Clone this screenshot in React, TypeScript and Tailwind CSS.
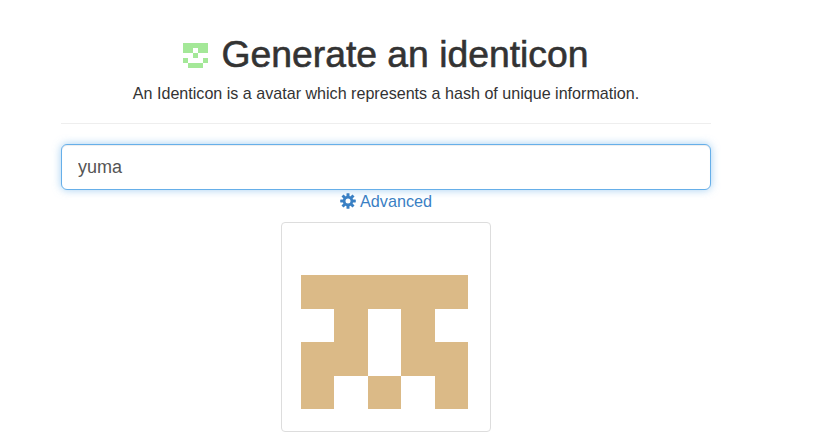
const FAVICON: [number, number, number][] = [
  [0, 0, 5],
  [0, 1, 2],
  [3, 1, 2],
  [2, 2, 1],
  [0, 3, 1],
  [4, 3, 1],
  [1, 4, 3],
];

const IDENTICON: [number, number, number][] = [
  [0, 1, 5],
  [1, 2, 1],
  [3, 2, 1],
  [0, 3, 2],
  [3, 3, 2],
  [0, 4, 1],
  [2, 4, 1],
  [4, 4, 1],
];

function Pixels({ cells, color, size }: { cells: [number, number, number][]; color: string; size: number }) {
  return (
    <svg width={size} height={size} viewBox="0 0 5 5" shapeRendering="crispEdges" className="block shrink-0">
      {cells.map(([x, y, w]) => (
        <rect key={`${x}-${y}`} x={x} y={y} width={w} height={1} fill={color} />
      ))}
    </svg>
  );
}

// eight-tooth cog, the font icon from the reference
function Cog() {
  return (
    <svg width={16} height={16} viewBox="0 0 16 16" className="block shrink-0" fill="currentColor">
      {[0, 45, 90, 135, 180, 225, 270, 315].map((deg) => (
        <rect key={deg} x={6.5} y={0.2} width={3} height={4} rx={0.4} transform={`rotate(${deg} 8 8)`} />
      ))}
      <path
        fillRule="evenodd"
        d="M8 2.8a5.2 5.2 0 1 0 0 10.4 5.2 5.2 0 0 0 0-10.4Zm0 2.7a2.5 2.5 0 1 1 0 5 2.5 2.5 0 0 1 0-5Z"
      />
    </svg>
  );
}

export default function App() {
  return (
    <div className="w-[838px] h-[439px] overflow-hidden bg-white font-['Liberation_Sans',Arial,sans-serif] text-[#333]">
      <div className="ml-[61px] w-[650px] flex flex-col items-center pt-[32px]">
        <div className="flex items-center h-[44px] gap-[13px]">
          <div className="mt-[3px]">
            <Pixels cells={FAVICON} color="#a4e898" size={25} />
          </div>
          <h1 className="text-[37.3px] leading-[44px] font-medium [-webkit-text-stroke:0.6px_#333]">Generate an identicon</h1>
        </div>
        <p className="mt-[6px] text-[16.1px] leading-[22px]">
          An Identicon is a avatar which represents a hash of unique information.
        </p>
        <div className="mt-[19px] w-full border-t border-[#eee]" />
        <input
          readOnly
          value="yuma"
          className="mt-[20px] w-full h-[46px] px-4 text-[18px] text-[#555] bg-white rounded-[6px] border border-[#66afe9] outline-none shadow-[inset_0_1px_1px_rgba(0,0,0,0.075),0_0_8px_rgba(102,175,233,0.6)]"
        />
        <a className="flex items-center gap-[4px] text-[16.2px] leading-[22px] text-[#3a80c4]">
          <Cog />
          Advanced
        </a>
        <div className="mt-[10px] pl-[19px] pt-[19px] pr-[22px] pb-[22px] border border-[#ddd] rounded-[4px]">
          <Pixels cells={IDENTICON} color="#dbba87" size={167} />
        </div>
      </div>
    </div>
  );
}
